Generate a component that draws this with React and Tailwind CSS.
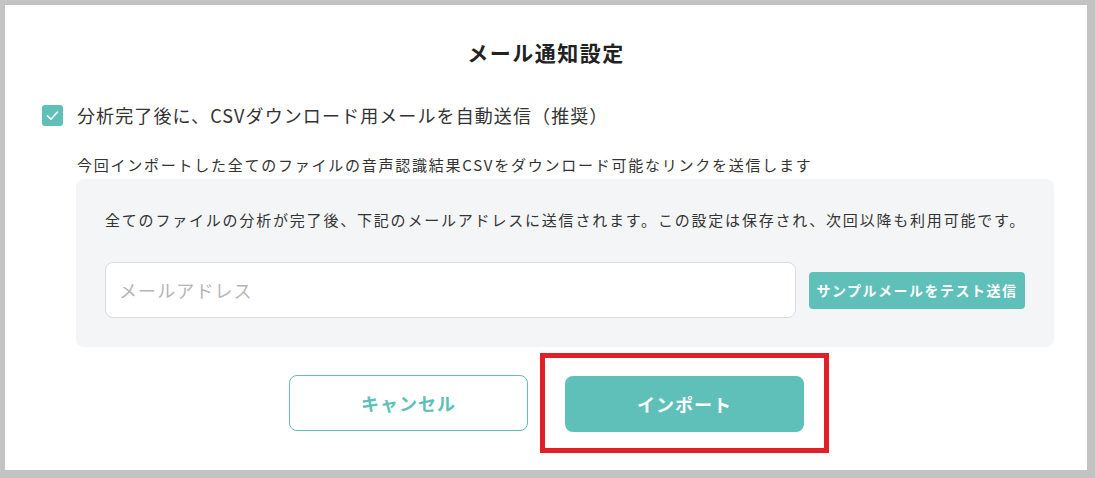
import React, { useState } from 'react';

const font = { fontFamily: '"Noto Sans CJK JP", "Noto Sans", sans-serif' };

export default function App() {
  const [checked, setChecked] = useState(true);

  return (
    <div className="w-[1095px] h-[478px] bg-[#c3c3c3] pl-[5px] pt-[5px] pr-[8px] pb-[8px]" style={font}>
      <div className="w-full h-full bg-white flex flex-col">
        {/* Title */}
        <h2 className="text-center text-[21px] tracking-[1.5px] font-bold text-[#222] mt-[32px] leading-[30px]">メール通知設定</h2>

        {/* Checkbox row */}
        <label className="flex items-center mt-[35px] ml-[37px] cursor-pointer">
          <span
            onClick={() => setChecked(!checked)}
            className="w-[21px] h-[21px] rounded-[3px] bg-[#5fc0b9] flex items-center justify-center"
          >
            {checked && (
              <svg width="15" height="15" viewBox="0 0 24 24" fill="none" stroke="white" strokeWidth="2.6" strokeLinecap="round" strokeLinejoin="round">
                <path d="M4 12.5l5.5 5.5L20 6.5" />
              </svg>
            )}
          </span>
          <span className="ml-[14px] text-[18px] tracking-[1.1px] text-[#333] leading-[26px]">分析完了後に、CSVダウンロード用メールを自動送信（推奨）</span>
        </label>

        <p className="ml-[72px] mt-[26px] text-[15px] tracking-[1.75px] text-[#333] leading-[22px]">
          今回インポートした全てのファイルの音声認識結果CSVをダウンロード可能なリンクを送信します
        </p>

        {/* Gray box */}
        <div className="ml-[71px] mr-[33px] mt-[3px] h-[168px] bg-[#f4f5f7] rounded-[8px] px-[29px] pt-[30px]">
          <p className="text-[15px] tracking-[1.8px] text-[#333] leading-[22px] whitespace-nowrap">
            全てのファイルの分析が完了後、下記のメールアドレスに送信されます。この設定は保存され、次回以降も利用可能です。
          </p>
          <div className="flex items-center mt-[31px]">
            <input
              type="text"
              placeholder="メールアドレス"
              className="w-[691px] h-[56px] bg-white border border-[#dcdcdc] rounded-[8px] px-[13px] text-[18px] tracking-[1.1px] text-[#333] placeholder:text-[#b5b5b5] outline-none"
              style={font}
            />
            <button className="ml-[13px] w-[216px] h-[37px] bg-[#5fc0b9] rounded-[4px] text-white text-[14px] tracking-[1.5px] font-bold">
              サンプルメールをテスト送信
            </button>
          </div>
        </div>

        {/* Buttons */}
        <div className="flex items-center justify-center mt-[6px] ml-[26px]">
          <button className="w-[239px] h-[56px] border border-[#5fc0b9] rounded-[8px] text-[#5fc0b9] text-[18px] tracking-[1px] font-bold bg-white">
            キャンセル
          </button>
          <div className="ml-[12px] border-[5px] border-[#e21e26] px-[20px] pt-[18px] pb-[16px]">
            <button className="w-[239px] h-[56px] bg-[#5fc0b9] rounded-[8px] text-white text-[18px] tracking-[1px] font-bold">
              インポート
            </button>
          </div>
        </div>
      </div>
    </div>
  );
}
